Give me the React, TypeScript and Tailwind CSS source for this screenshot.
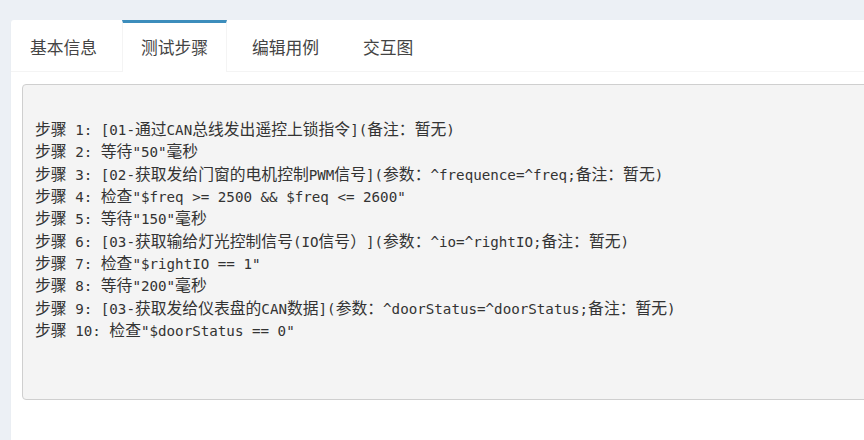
import React from 'react';

const TABS = ['基本信息', '测试步骤', '编辑用例', '交互图'];

const STEPS = [
  '步骤 1: [01-通过CAN总线发出遥控上锁指令](备注：暂无)',
  '步骤 2: 等待"50"毫秒',
  '步骤 3: [02-获取发给门窗的电机控制PWM信号](参数：^frequence=^freq;备注：暂无)',
  '步骤 4: 检查"$freq >= 2500 && $freq <= 2600"',
  '步骤 5: 等待"150"毫秒',
  '步骤 6: [03-获取输给灯光控制信号(IO信号）](参数：^io=^rightIO;备注：暂无)',
  '步骤 7: 检查"$rightIO == 1"',
  '步骤 8: 等待"200"毫秒',
  '步骤 9: [03-获取发给仪表盘的CAN数据](参数：^doorStatus=^doorStatus;备注：暂无)',
  '步骤 10: 检查"$doorStatus == 0"',
];

// wide glyphs come out a bit bigger than the mono latin in the screenshot
function Line({ text }: { text: string }) {
  const parts = text.split(/([\u3000-\u9fff\uff00-\uffef]+)/);
  return (
    <div>
      {parts.map((p, i) =>
        i % 2 === 1 ? (
          <span key={i} className="text-[15.8px]">{p}</span>
        ) : (
          <span key={i}>{p}</span>
        )
      )}
    </div>
  );
}

export default function App() {
  const active = 1;

  return (
    <div className="h-[440px] w-full overflow-hidden bg-[#ecf0f5] pl-[11px] pt-[20px]">
      <div className="h-full w-[880px] rounded-tl-[3px] bg-white shadow-[0_1px_1px_rgba(0,0,0,0.1)]">
        {/* tabs */}
        <ul className="flex h-[52px] border-b border-[#f4f4f4] font-['Noto_Sans_CJK_SC',sans-serif] text-[16.75px] text-[#444]">
          {TABS.map((t, i) => (
            <li
              key={t}
              className={
                i === active
                  ? 'mr-[6px] -mb-px flex h-[52px] items-center border-x border-t-[3px] border-x-[#f4f4f4] border-t-[#3c8dbc] bg-white px-[18px]'
                  : 'mr-[6px] -mb-px flex h-[52px] items-center border-x border-t-[3px] border-transparent px-[18px]'
              }
            >
              {t}
            </li>
          ))}
        </ul>

        {/* steps */}
        <div className="pl-[11px] pt-[12px]">
          <pre className="rounded-[4px] border border-[#cfcfcf] bg-[#f4f4f4] pl-[12px] pt-[34px] pb-[57px] font-['DejaVu_Sans_Mono','Noto_Sans_CJK_SC',monospace] text-[14.2px] leading-[22.33px] text-[#333] [text-spacing-trim:space-all]">
            {STEPS.map((s) => (
              <Line key={s} text={s} />
            ))}
          </pre>
        </div>
      </div>
    </div>
  );
}
